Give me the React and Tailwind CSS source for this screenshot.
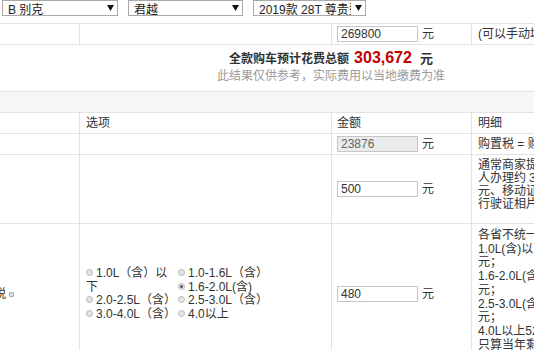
import React from "react";

function Select({ cls, text }) {
  return (
    <div className={`relative h-[16px] border border-[#a9a9a9] bg-white overflow-hidden ${cls}`}>
      <div className="pl-[5px] pt-[2px] text-[12px] leading-[14px] whitespace-nowrap text-[#222]">{text}</div>
      <div className="absolute right-0 top-0 h-full w-[14px] bg-white flex items-center justify-center">
        <svg width="7" height="6" viewBox="0 0 7 6">
          <polygon points="0,0 7,0 3.5,6" fill="#111" />
        </svg>
      </div>
    </div>
  );
}

function Input({ value, gray }) {
  return (
    <div
      className={`w-[81px] h-[16px] border border-[#c6c6c6] pl-[3px] text-[12px] leading-[14px] ${
        gray ? "bg-[#ebebeb] text-[#666]" : "bg-white text-[#333]"
      }`}
    >
      {value}
    </div>
  );
}

function Radio({ checked }) {
  return (
    <span className="relative inline-block w-[7px] h-[7px] rounded-full border border-[#b8b8b8] bg-[#e4e4e4] mr-[3px] align-middle -top-[1px]">
      {checked && <span className="absolute left-[1px] top-[1px] w-[3px] h-[3px] rounded-full bg-[#555]" />}
    </span>
  );
}

export default function App() {
  return (
    <div className="w-[534px] h-[350px] overflow-hidden bg-white text-[12px] text-[#333] font-['Liberation_Sans','Noto_Sans_CJK_SC',sans-serif]">
      {/* top selects */}
      <div className="h-[24px] border-b border-[#e3e3e3] flex items-start pl-[2px]">
        <Select cls="w-[116px]" text="B 别克" />
        <Select cls="w-[115px] ml-[10px]" text="君越" />
        <Select cls="w-[113px] ml-[10px]" text="2019款 28T 尊贵型" />
      </div>

      {/* price row */}
      <div className="h-[21px] border-b border-[#e3e3e3] flex w-[700px]">
        <div className="w-[80px] border-r border-[#e3e3e3]" />
        <div className="w-[252px] border-r border-[#e3e3e3]" />
        <div className="w-[140px] border-r border-[#e3e3e3] flex items-center pl-[5px]">
          <Input value="269800" />
          <span className="ml-[4px]">元</span>
        </div>
        <div className="flex items-center pl-[6px] whitespace-nowrap">(可以手动填写价格)</div>
      </div>

      {/* total */}
      <div className="h-[47px] border-b border-[#e3e3e3] w-[662px] text-center pt-[5px]">
        <div className="leading-[16px] font-bold whitespace-nowrap">
          <span className="text-[12px]">全款购车预计花费总额</span>
          <span className="text-[16px] text-[#c40000] ml-[5px]">303,672</span>
          <span className="text-[13px] ml-[8px]">元</span>
        </div>
        <div className="mt-[2px] leading-[14px] text-[#9a9a9a] whitespace-nowrap">此结果仅供参考，实际费用以当地缴费为准</div>
      </div>

      {/* band */}
      <div className="h-[21px] border-b border-[#e3e3e3] bg-[#f6f7f9]" />

      {/* header */}
      <div className="h-[21px] border-b border-[#e3e3e3] flex w-[700px] leading-[20px]">
        <div className="w-[80px] border-r border-[#e3e3e3]" />
        <div className="w-[252px] border-r border-[#e3e3e3] pl-[6px]">选项</div>
        <div className="w-[140px] border-r border-[#e3e3e3] pl-[5px]">金额</div>
        <div className="pl-[6px]">明细</div>
      </div>

      {/* purchase tax */}
      <div className="h-[21px] border-b border-[#e3e3e3] flex w-[700px]">
        <div className="w-[80px] border-r border-[#e3e3e3]" />
        <div className="w-[252px] border-r border-[#e3e3e3]" />
        <div className="w-[140px] border-r border-[#e3e3e3] flex items-center pl-[5px]">
          <Input value="23876" gray />
          <span className="ml-[4px]">元</span>
        </div>
        <div className="flex items-center pl-[6px] whitespace-nowrap">购置税 = 购车价格 / (1+13%) × 10%</div>
      </div>

      {/* plate fee */}
      <div className="h-[69px] border-b border-[#e3e3e3] flex w-[700px]">
        <div className="w-[80px] border-r border-[#e3e3e3]" />
        <div className="w-[252px] border-r border-[#e3e3e3]" />
        <div className="w-[140px] border-r border-[#e3e3e3] flex items-center pl-[5px]">
          <Input value="500" />
          <span className="ml-[4px]">元</span>
        </div>
        <div className="pl-[6px] pt-[4px] leading-[13px] whitespace-nowrap">
          <div>通常商家提供上牌服务，个</div>
          <div>人办理约 300 元，其中号牌费 100</div>
          <div>元、移动证 5 元、工本费 10 元、</div>
          <div>行驶证相片 20 元等</div>
        </div>
      </div>

      {/* vehicle tax */}
      <div className="h-[140px] flex w-[700px]">
        <div className="w-[80px] border-r border-[#e3e3e3] flex items-center overflow-hidden">
          <span className="ml-[-30px] whitespace-nowrap">车船税</span>
          <span className="ml-[3px] inline-block w-[5px] h-[5px] rounded-[1px] border border-[#aaa] bg-[#ddd]" />
        </div>
        <div className="w-[252px] border-r border-[#e3e3e3] flex items-center pl-[6px]">
          <div className="grid grid-cols-[92px_92px] leading-[13.5px]">
            <div className="row-span-2"><Radio />1.0L（含）以下</div>
            <div className="whitespace-nowrap"><Radio />1.0-1.6L（含）</div>
            <div className="whitespace-nowrap"><Radio checked />1.6-2.0L(含)</div>
            <div className="whitespace-nowrap"><Radio />2.0-2.5L（含）</div>
            <div className="whitespace-nowrap"><Radio />2.5-3.0L（含）</div>
            <div className="whitespace-nowrap"><Radio />3.0-4.0L（含）</div>
            <div className="whitespace-nowrap"><Radio />4.0以上</div>
          </div>
        </div>
        <div className="w-[140px] border-r border-[#e3e3e3] flex items-center pl-[5px]">
          <Input value="480" />
          <span className="ml-[4px]">元</span>
        </div>
        <div className="pl-[6px] pt-[5px] leading-[13.7px] whitespace-nowrap">
          <div>各省不统一，以北京为例：</div>
          <div>1.0L(含)以下300元；1.0-1.6L(含)420</div>
          <div>元；</div>
          <div>1.6-2.0L(含)480元；2.0-2.5L(含)900</div>
          <div>元；</div>
          <div>2.5-3.0L(含)1920元；3.0-4.0L(含)3480</div>
          <div>元；</div>
          <div>4.0L以上5280元；</div>
          <div>只算当年剩余月份</div>
        </div>
      </div>
    </div>
  );
}
